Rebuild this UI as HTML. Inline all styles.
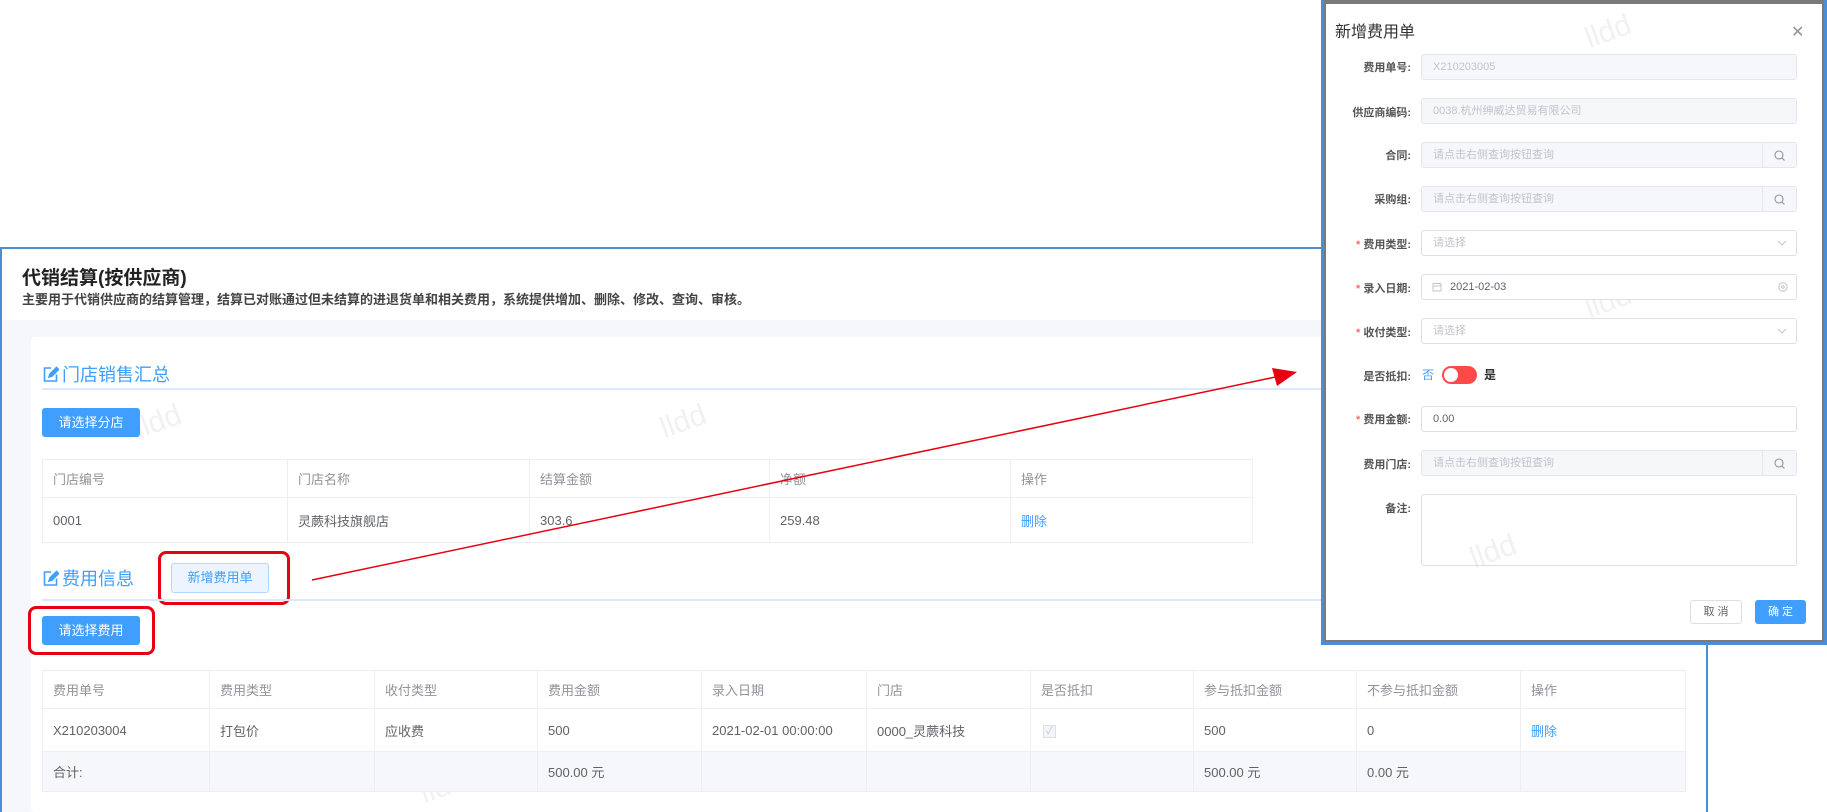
<!DOCTYPE html>
<html><head><meta charset="utf-8"><style>
*{box-sizing:border-box;margin:0;padding:0}
body{width:1827px;height:812px;position:relative;overflow:hidden;background:#fff;font-family:"Liberation Sans","Noto Sans CJK SC",sans-serif;color:#606266}
.a{position:absolute}
.btn{position:absolute;background:#409eff;color:#fff;border-radius:3px;font-size:13px;text-align:center;line-height:29px}
table{border-collapse:collapse;position:absolute;font-size:13px;table-layout:fixed}
td{border:1px solid #ebeef5;padding-left:10px;color:#606266}
.hd td{color:#909399}
.sec{position:absolute;color:#409eff;font-size:18px}
.sec svg{vertical-align:-2px;margin-right:3px}
.line{position:absolute;height:2px;background:#dbe9fb}
.lbl{position:absolute;right:calc(1827px - 1411px);font-size:11px;font-weight:bold;color:#555;text-align:right;white-space:nowrap}
.lbl i{color:#f56c6c;font-style:normal;margin-right:3px}
.inp{position:absolute;left:1421px;width:376px;height:26px;border:1px solid #dcdfe6;border-radius:3px;font-size:11px;line-height:24px;padding-left:11px;color:#c0c4cc;background:#fff}
.dis{background:#f5f7fa;border-color:#e4e7ed}
.srch{position:absolute;right:0;top:0;width:34px;height:24px;border-left:1px solid #e4e7ed;text-align:center}
.srch svg{margin-top:7px}
.wm{position:absolute;color:#f1f1f1;font-size:30px;transform:rotate(-20deg);font-family:"Liberation Sans",sans-serif}
.red{position:absolute;border:3px solid #e60012;border-radius:8px}
</style></head><body>

<div class="a" style="left:0;top:247px;width:1708px;height:565px;border:2px solid #4a8fd6;border-bottom:none;background:#fff"></div>
<div class="a" style="left:2px;top:320px;width:1704px;height:492px;background:#f5f7fa"></div>
<div class="a" style="left:31px;top:337px;width:1675px;height:475px;background:#fff;border-radius:4px"></div>
<div class="a" style="left:22px;top:263px;font-size:19px;font-weight:bold;color:#222">代销结算(按供应商)</div>
<div class="a" style="left:22px;top:289px;font-size:13px;font-weight:bold;color:#444">主要用于代销供应商的结算管理，结算已对账通过但未结算的进退货单和相关费用，系统提供增加、删除、修改、查询、审核。</div>
<div class="wm" style="left:135px;top:405px">lldd</div>
<div class="wm" style="left:660px;top:405px">lldd</div>
<div class="wm" style="left:420px;top:770px">lldd</div>

<div class="sec" style="left:42px;top:361px"><svg width="17" height="17" viewBox="0 0 17 17" fill="none" stroke="#409eff" stroke-width="1.6"><path d="M9 2H2.5v13h12V8.5"/><path d="M7 11l1-3 6.5-6.5 2 2L10 10z" fill="#409eff"/></svg>门店销售汇总</div>
<div class="line" style="left:42px;top:388px;width:1290px"></div>
<div class="btn" style="left:42px;top:408px;width:98px">请选择分店</div>
<table style="left:42px;top:459px;width:1210px">
<col style="width:245px"><col style="width:242px"><col style="width:240px"><col style="width:241px"><col style="width:242px">
<tr class="hd" style="height:38px"><td>门店编号</td><td>门店名称</td><td>结算金额</td><td>净额</td><td>操作</td></tr>
<tr style="height:45px"><td>0001</td><td>灵蕨科技旗舰店</td><td>303.6</td><td>259.48</td><td style="color:#409eff">删除</td></tr>
</table>

<div class="sec" style="left:42px;top:565px"><svg width="17" height="17" viewBox="0 0 17 17" fill="none" stroke="#409eff" stroke-width="1.6"><path d="M9 2H2.5v13h12V8.5"/><path d="M7 11l1-3 6.5-6.5 2 2L10 10z" fill="#409eff"/></svg>费用信息</div>
<div class="a" style="left:171px;top:563px;width:98px;height:30px;background:#ecf5ff;border:1px solid #b3d8ff;border-radius:3px;color:#409eff;font-size:13px;text-align:center;line-height:28px">新增费用单</div>
<div class="red" style="left:158px;top:551px;width:132px;height:54px"></div>
<div class="line" style="left:42px;top:599px;width:1280px"></div>
<div class="btn" style="left:42px;top:616px;width:98px">请选择费用</div>
<div class="red" style="left:28px;top:606px;width:127px;height:49px"></div>
<table style="left:42px;top:670px;width:1643px">
<col style="width:167px"><col style="width:165px"><col style="width:163px"><col style="width:164px"><col style="width:165px"><col style="width:164px"><col style="width:163px"><col style="width:163px"><col style="width:164px"><col style="width:165px">
<tr class="hd" style="height:38px"><td>费用单号</td><td>费用类型</td><td>收付类型</td><td>费用金额</td><td>录入日期</td><td>门店</td><td>是否抵扣</td><td>参与抵扣金额</td><td>不参与抵扣金额</td><td>操作</td></tr>
<tr style="height:43px"><td>X210203004</td><td>打包价</td><td>应收费</td><td>500</td><td>2021-02-01 00:00:00</td><td>0000_灵蕨科技</td><td><span style="display:inline-block;width:13px;height:13px;border:1px solid #dcdfe6;background:#f2f6fc;color:#c0c4cc;font-size:10px;line-height:11px;text-align:center;margin-left:2px">✓</span></td><td>500</td><td>0</td><td style="color:#409eff">删除</td></tr>
<tr style="height:40px;background:#f5f7fa"><td>合计:</td><td></td><td></td><td>500.00 元</td><td></td><td></td><td></td><td>500.00 元</td><td>0.00 元</td><td></td></tr>
</table>

<svg class="a" style="left:0;top:0" width="1827" height="812"><line x1="312" y1="580" x2="1285" y2="375" stroke="#e60012" stroke-width="1.5"/><polygon points="1297,372 1272,368 1277,386" fill="#e60012"/></svg>

<div class="a" style="left:1321px;top:0;width:506px;height:645px;border:3px solid #4a8fd6;border-top:none;background:#fff">
<div style="position:absolute;inset:0;border:2px solid #7a7a7a;border-top:4px solid #7a7a7a"></div></div>
<div class="wm" style="left:1585px;top:15px">lldd</div>
<div class="wm" style="left:1585px;top:285px">lldd</div>
<div class="wm" style="left:1470px;top:535px">lldd</div>
<div class="a" style="left:1335px;top:18px;font-size:16px;color:#303133">新增费用单</div>
<div class="a" style="left:1791px;top:22px;font-size:16px;color:#909399">✕</div>

<div class="lbl" style="top:59px">费用单号:</div><div class="inp dis" style="top:54px">X210203005</div>
<div class="lbl" style="top:104px">供应商编码:</div><div class="inp dis" style="top:98px">0038.杭州绅威达贸易有限公司</div>
<div class="lbl" style="top:147px">合同:</div><div class="inp dis" style="top:142px">请点击右侧查询按钮查询<span class="srch"><svg width="11" height="11" viewBox="0 0 11 11" fill="none" stroke="#909399" stroke-width="1.1"><circle cx="5" cy="5" r="4"/><path d="M8 8l2.5 2.5"/></svg></span></div>
<div class="lbl" style="top:191px">采购组:</div><div class="inp dis" style="top:186px">请点击右侧查询按钮查询<span class="srch"><svg width="11" height="11" viewBox="0 0 11 11" fill="none" stroke="#909399" stroke-width="1.1"><circle cx="5" cy="5" r="4"/><path d="M8 8l2.5 2.5"/></svg></span></div>
<div class="lbl" style="top:236px"><i>*</i>费用类型:</div><div class="inp" style="top:230px">请选择<svg style="position:absolute;right:9px;top:9px" width="10" height="6" viewBox="0 0 10 6" fill="none" stroke="#c0c4cc"><path d="M1 1l4 4 4-4"/></svg></div>
<div class="lbl" style="top:280px"><i>*</i>录入日期:</div><div class="inp" style="top:274px;color:#606266;padding-left:28px"><svg style="position:absolute;left:10px;top:7px" width="10" height="10" viewBox="0 0 10 10" fill="none" stroke="#c0c4cc"><rect x="1" y="1.5" width="8" height="7.5"/><path d="M1 4h8"/></svg>2021-02-03<svg style="position:absolute;right:8px;top:7px" width="10" height="10" viewBox="0 0 10 10" fill="none" stroke="#c0c4cc"><circle cx="5" cy="5" r="4.2"/><circle cx="5" cy="5" r="1.3"/></svg></div>
<div class="lbl" style="top:324px"><i>*</i>收付类型:</div><div class="inp" style="top:318px">请选择<svg style="position:absolute;right:9px;top:9px" width="10" height="6" viewBox="0 0 10 6" fill="none" stroke="#c0c4cc"><path d="M1 1l4 4 4-4"/></svg></div>
<div class="lbl" style="top:368px">是否抵扣:</div>
<div class="a" style="left:1422px;top:366px;font-size:12px;color:#409eff">否</div>
<div class="a" style="left:1442px;top:366px;width:35px;height:18px;border-radius:9px;background:#ff4949"><div style="position:absolute;left:2px;top:2px;width:14px;height:14px;border-radius:7px;background:#fff"></div></div>
<div class="a" style="left:1484px;top:366px;font-size:12px;color:#303133;font-weight:bold">是</div>
<div class="lbl" style="top:411px"><i>*</i>费用金额:</div><div class="inp" style="top:406px;color:#606266">0.00</div>
<div class="lbl" style="top:456px">费用门店:</div><div class="inp dis" style="top:450px">请点击右侧查询按钮查询<span class="srch"><svg width="11" height="11" viewBox="0 0 11 11" fill="none" stroke="#909399" stroke-width="1.1"><circle cx="5" cy="5" r="4"/><path d="M8 8l2.5 2.5"/></svg></span></div>
<div class="lbl" style="top:500px">备注:</div><div class="inp" style="top:494px;height:72px;background:transparent"></div>
<div class="a" style="left:1690px;top:600px;width:52px;height:24px;border:1px solid #dcdfe6;border-radius:3px;font-size:11px;text-align:center;line-height:22px;color:#606266">取 消</div>
<div class="a" style="left:1755px;top:600px;width:51px;height:24px;background:#409eff;border-radius:3px;font-size:11px;text-align:center;line-height:24px;color:#fff">确 定</div>
</body></html>
